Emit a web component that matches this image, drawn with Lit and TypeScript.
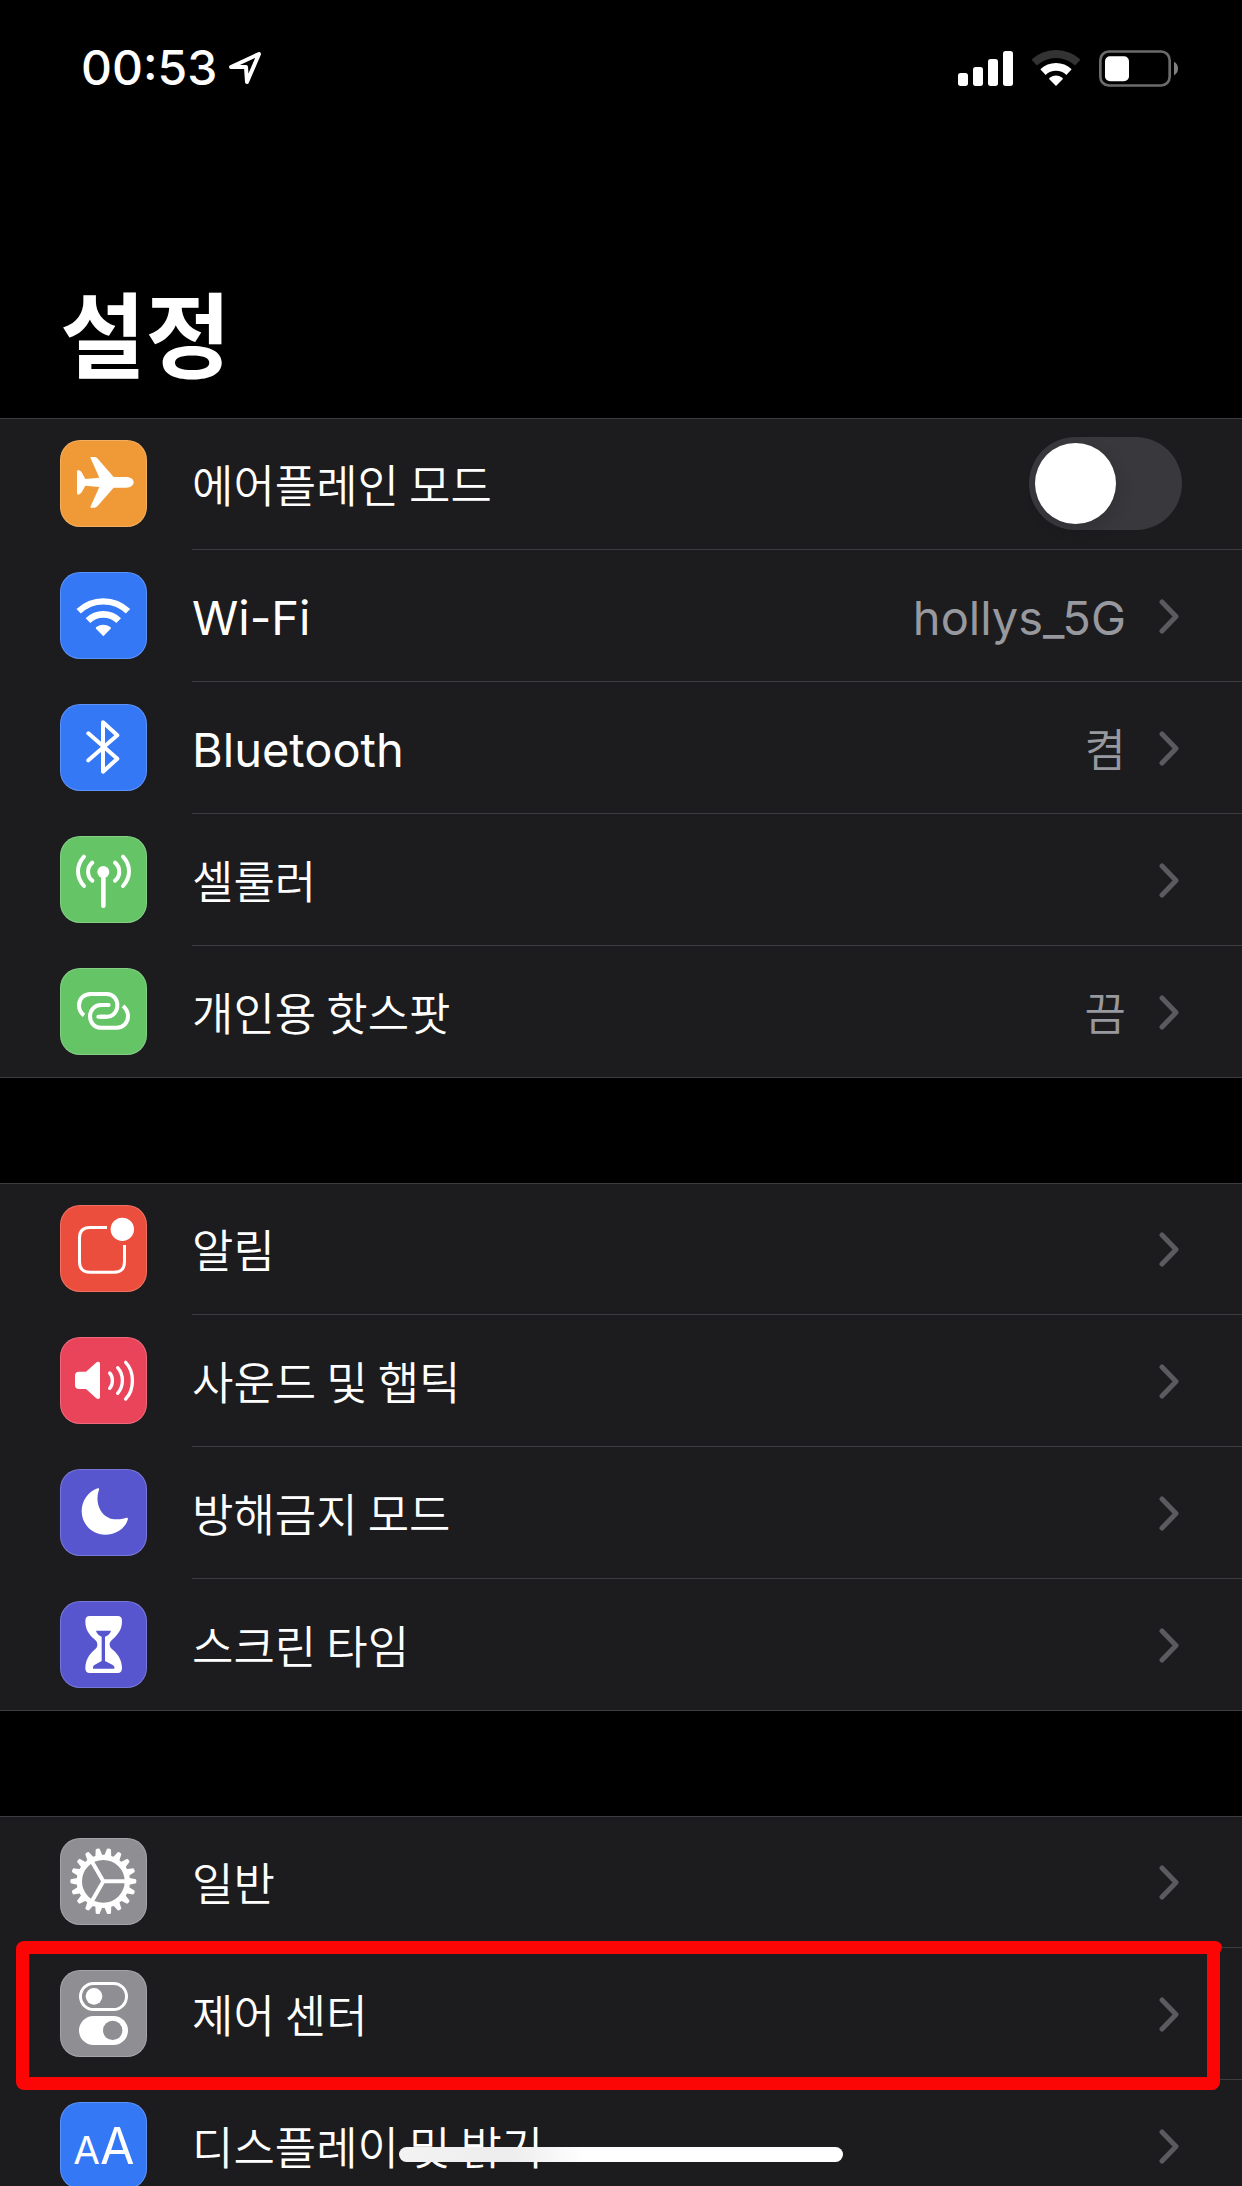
import { LitElement, html, svg, css, nothing } from "lit";
import type { SVGTemplateResult } from "lit";
import { customElement, property, state } from "lit/decorators.js";
import { classMap } from "lit/directives/class-map.js";

type IconName =
  | "airplane"
  | "wifi"
  | "bluetooth"
  | "cellular"
  | "hotspot"
  | "notifications"
  | "sound"
  | "moon"
  | "hourglass"
  | "gear"
  | "control"
  | "display";

type Tone = "orange" | "blue" | "green" | "red" | "pink" | "purple" | "gray";

interface Item {
  icon: IconName;
  tone: Tone;
  label: string;
  value?: string;
  toggle?: boolean;
  marked?: boolean;
}

const GROUPS: Item[][] = [
  [
    { icon: "airplane", tone: "orange", label: "에어플레인 모드", toggle: true },
    { icon: "wifi", tone: "blue", label: "Wi-Fi", value: "hollys_5G" },
    { icon: "bluetooth", tone: "blue", label: "Bluetooth", value: "켬" },
    { icon: "cellular", tone: "green", label: "셀룰러" },
    { icon: "hotspot", tone: "green", label: "개인용 핫스팟", value: "끔" },
  ],
  [
    { icon: "notifications", tone: "red", label: "알림" },
    { icon: "sound", tone: "pink", label: "사운드 및 햅틱" },
    { icon: "moon", tone: "purple", label: "방해금지 모드" },
    { icon: "hourglass", tone: "purple", label: "스크린 타임" },
  ],
  [
    { icon: "gear", tone: "gray", label: "일반" },
    { icon: "control", tone: "gray", label: "제어 센터", marked: true },
    { icon: "display", tone: "blue", label: "디스플레이 및 밝기" },
  ],
];

const gearTeeth = Array.from({ length: 18 }, (_, i) => i * 20);

/* Glyphs are drawn on a 261-unit square, three units to a pixel. */
const GLYPHS: Record<IconName, SVGTemplateResult> = {
  airplane: svg`<path class="fill" d="M221 127C221 118 212 111 199 111H161L112 55Q108 51 103 51H93Q90 51 92 55L118 113L76 117L65 97Q61 91 55 90Q51 90 51 95V159Q51 164 55 164Q61 163 65 157L76 137L118 141L92 199Q90 203 93 203H103Q108 203 112 199L161 143H199C212 143 221 136 221 127Z"/>`,
  wifi: svg`
    <path class="line butt" stroke-width="19" d="M56 118A106 106 0 0 1 204 118"/>
    <path class="line butt" stroke-width="20" d="M84 146A66 66 0 0 1 176 146"/>
    <path class="fill" d="M130 193L108 170Q106 168 109 165Q130 152 151 165Q154 168 152 170Z"/>`,
  bluetooth: svg`<path class="line" stroke-width="12" d="M85 88L172 164L129 203V55L172 94L85 169"/>`,
  cellular: svg`
    <circle class="fill" cx="130" cy="108" r="18"/>
    <path class="line" stroke-width="14" d="M130 108V209"/>
    <path class="line" stroke-width="12" d="M97 80C80 94 80 120 97 134M72 62C48 88 48 124 72 150M165 80C182 94 182 120 165 134M189 62C213 88 213 124 189 150"/>`,
  hotspot: svg`
    <path class="line butt" stroke-width="12" d="M72 142C61 134 57 124 57 112C57 92 72 78 92 78H140C160 78 172 94 172 112C172 130 160 146 142 146H120"/>
    <path class="line butt" stroke-width="12" d="M140 111H122C104 111 90 126 90 145C90 164 103 179 122 179H170C190 179 204 164 204 145C204 134 200 123 189 114"/>
    <path class="line" stroke-width="12" d="M146 111H125M115 146H138"/>`,
  notifications: svg`
    <path class="line butt" stroke-width="9" d="M141 67.5H90Q58.5 67.5 58.5 99V170Q58.5 201.5 90 201.5H162Q193.5 201.5 193.5 170V120"/>
    <circle class="fill" cx="187" cy="73" r="35"/>`,
  sound: svg`
    <path class="fill" d="M57 104H78L108 77Q111 74 115 74Q120 74 120 80V180Q120 186 115 186Q111 186 108 183L78 156H57Q45 156 45 144V116Q45 104 57 104Z"/>
    <path class="line" stroke-width="10" d="M149 108C160 120 160 142 149 154M173 92C192 114 192 147 173 169M197 76C224 104 224 158 197 186"/>`,
  moon: svg`<path class="fill" d="M113 58C118 57 118 61 116 65C104 100 122 151 170 151C182 151 190 149 197 147C203 145 205 149 203 153C194 180 167 197 136 197C97 197 65 166 65 127C65 96 84 68 113 58Z"/>`,
  hourglass: svg`
    <path class="fill" d="M89 45H173Q186 45 186 60C186 85 175 98 163 110C152 120 149 123 149 130C149 138 152 141 160 148C176 162 186 180 186 202Q186 216 173 216H89Q76 216 76 202C76 180 86 162 102 148C110 141 112 138 112 130C112 123 109 119 98 110C86 98 76 85 76 60Q76 45 89 45Z"/>
    <path class="cut" d="M108 89H153C151 98 144 103 135 107V180C140 184 160 190 163 197V203H99V197C102 190 120 184 125 180V107C117 103 110 98 108 89Z"/>`,
  gear: svg`
    <circle class="line" stroke-width="16" cx="130" cy="130" r="72"/>
    ${gearTeeth.map(
      (a) => svg`<path class="fill" transform="rotate(${a} 130 130)" d="M205 119L228 124Q231 130 228 136L205 141Z"/>`,
    )}
    <path class="line butt" stroke-width="12" d="M130 130H198M130 130L96 71M130 130L96 189"/>`,
  control: svg`
    <rect class="line" stroke-width="9" x="61.5" y="40.5" width="138" height="78" rx="39"/>
    <circle class="fill" cx="102" cy="79" r="25"/>
    <rect class="fill" x="57" y="138" width="147" height="87" rx="43.5"/>
    <circle class="cut" cx="158" cy="181" r="29"/>`,
  display: svg`
    <text class="letters" text-anchor="middle" x="80" y="185" font-size="116">A</text>
    <text class="letters" text-anchor="middle" x="172" y="185" font-size="150">A</text>`,
};

@customElement("settings-row")
class SettingsRow extends LitElement {
  @property({ attribute: false }) item!: Item;
  @property({ type: Boolean }) last = false;
  @state() private on = false;

  static styles = css`
    :host {
      display: block;
      position: relative;
    }
    .row {
      display: flex;
      gap: 45px;
      padding-left: 60px;
      color: #fff;
      text-decoration: none;
    }
    .tile {
      flex: none;
      width: 87px;
      height: 87px;
      margin: 22px 0;
      border-radius: 20px;
      box-shadow: inset 0 0 0 1px rgba(255, 255, 255, 0.2);
      background: var(--tone);
    }
    .orange { --tone: #f09a37; }
    .blue { --tone: #3478f6; }
    .green { --tone: #65c466; }
    .red { --tone: #eb4e3d; }
    .pink { --tone: #ea445a; }
    .purple { --tone: #5756ce; }
    .gray { --tone: #8e8e93; }
    .glyph {
      display: block;
      width: 100%;
      height: 100%;
    }
    .fill { fill: #fff; }
    .cut { fill: var(--tone); }
    .line {
      fill: none;
      stroke: #fff;
      stroke-linecap: round;
      stroke-linejoin: round;
    }
    .butt { stroke-linecap: butt; }
    .letters {
      fill: #fff;
      font-family: Inter, sans-serif;
      font-weight: 400;
    }
    .body {
      flex: 1;
      min-width: 0;
      min-height: 131px;
      display: flex;
      align-items: center;
      padding-right: 60px;
      border-bottom: 1px solid #3d3d41;
    }
    .last {
      border-bottom: none;
    }
    .text {
      font-family: "Noto Sans CJK KR", sans-serif;
      font-size: 45px;
      line-height: 60px;
      font-weight: 350;
      white-space: nowrap;
    }
    .latin {
      font-family: Inter, sans-serif;
      font-size: 47px;
      font-weight: 400;
      padding-top: 4px;
    }
    .label {
      flex: 1;
    }
    .value {
      color: #98989f;
      margin-right: 32px;
    }
    .chevron {
      flex: none;
      width: 24px;
      height: 36px;
      fill: none;
      stroke: #5a5a5f;
      stroke-width: 5;
      stroke-linecap: round;
      stroke-linejoin: round;
    }
    .switch {
      appearance: none;
      flex: none;
      box-sizing: border-box;
      width: 153px;
      height: 93px;
      margin: 0;
      padding: 6px;
      border-radius: 47px;
      background: #39393d;
      display: flex;
    }
    .switch::before {
      content: "";
      width: 81px;
      height: 81px;
      border-radius: 50%;
      background: #fff;
      box-shadow: 4px 6px 16px rgba(0, 0, 0, 0.12);
    }
    .switch:checked {
      background: #65c466;
      justify-content: flex-end;
    }
    .marker {
      position: absolute;
      inset: -7px 22px -10px 16px;
      border: 13px solid #fb0505;
      border-radius: 8px;
      pointer-events: none;
    }
    .marker::after {
      content: "";
      position: absolute;
      top: -13px;
      right: -15px;
      width: 16px;
      height: 13px;
      border-radius: 7px;
      background: #fb0505;
    }
  `;

  private text(kind: string, text: string) {
    const latin = /^[\x20-\x7e]+$/.test(text);
    return html`<span class=${classMap({ text: true, [kind]: true, latin })}>${text}</span>`;
  }

  render() {
    const { icon, tone, label, value, toggle, marked } = this.item;
    const tile = html`<span class="tile ${tone}">
      <svg class="glyph" viewBox="0 0 261 261" aria-hidden="true">${GLYPHS[icon]}</svg>
    </span>`;
    const body = classMap({ body: true, last: this.last });
    if (toggle) {
      return html`<label class="row">
        ${tile}
        <span class=${body}>
          ${this.text("label", label)}
          <input
            class="switch"
            type="checkbox"
            role="switch"
            .checked=${this.on}
            @change=${(e: Event) => (this.on = (e.target as HTMLInputElement).checked)}
          />
        </span>
      </label>`;
    }
    return html`<a class="row" href="#${icon}">
        ${tile}
        <span class=${body}>
          ${this.text("label", label)}
          ${value ? this.text("value", value) : nothing}
          <svg class="chevron" viewBox="0 0 24 36" aria-hidden="true">
            <path d="M4 4L18 18.500L4 33" />
          </svg>
        </span>
      </a>
      ${marked ? html`<div class="marker"></div>` : nothing}`;
  }
}

@customElement("status-bar")
class StatusBar extends LitElement {
  static styles = css`
    :host {
      display: flex;
      align-items: center;
      height: 36px;
      padding: 50px 64px 46px 81px;
      color: #fff;
    }
    .time {
      font: 500 48px/36px Inter, sans-serif;
    }
    .arrow {
      width: 34px;
      height: 34px;
      margin-left: 11px;
      fill: none;
      stroke: #fff;
      stroke-width: 4;
      stroke-linejoin: round;
    }
    .signs {
      display: flex;
      align-items: center;
      gap: 19px;
      margin-left: auto;
    }
    .signal { width: 55px; height: 35px; fill: #fff; }
    .wifi { width: 48px; height: 36px; }
    .battery { width: 79px; height: 37px; }
  `;

  render() {
    return html`
      <time class="time">00:53</time>
      <svg class="arrow" viewBox="0 0 34 34" aria-hidden="true">
        <path d="M3 16L31 3L19 31L18 16Z" />
      </svg>
      <div class="signs">
        <svg class="signal" viewBox="0 0 165 105" aria-hidden="true">
          <rect x="0" y="66" width="30" height="39" rx="8" />
          <rect x="45" y="48" width="30" height="57" rx="8" />
          <rect x="90" y="24" width="30" height="81" rx="8" />
          <rect x="135" y="0" width="30" height="105" rx="8" />
        </svg>
        <svg class="wifi" viewBox="334 87 144 108" aria-hidden="true">
          <path fill="none" stroke="#333" stroke-width="24" d="M340.500 124.800A96 96 0 0 1 471.500 124.800" />
          <path fill="none" stroke="#fff" stroke-width="23" d="M367 153.300A57 57 0 0 1 445 153.300" />
          <path fill="#fff" d="M406 195L386 175Q384 172 387 170Q406 157 425 170Q428 172 426 175Z" />
        </svg>
        <svg class="battery" viewBox="537 87 237 110" aria-hidden="true">
          <rect x="541" y="91" width="208" height="102" rx="26" fill="none" stroke="#6b6b6b" stroke-width="8" />
          <rect x="555" y="105" width="72" height="75" rx="15" fill="#fff" />
          <path fill="#808080" d="M762 122Q774 128 774 142Q774 156 762 162Z" />
        </svg>
      </div>
    `;
  }
}

@customElement("app-root")
class AppRoot extends LitElement {
  static styles = css`
    :host {
      display: block;
      position: relative;
      height: 100vh;
      overflow: hidden;
      background: #000;
    }
    .title {
      margin: 0;
      padding: 143px 60px 31px;
      color: #fff;
      font: 700 93px/112px "Noto Sans CJK KR", sans-serif;
    }
    .groups {
      display: flex;
      flex-direction: column;
      gap: 105px;
    }
    .group {
      margin: 0;
      padding: 0;
      list-style: none;
      background: #1c1c1e;
      border-bottom: 1px solid #3d3d41;
      box-shadow: inset 0 1px #3d3d41;
    }
    .home {
      position: absolute;
      left: 50%;
      bottom: 24px;
      width: 444px;
      height: 15px;
      margin-left: -222px;
      border-radius: 8px;
      background: linear-gradient(90deg, #f3f3f3, #ededed 25%, #fff 42%);
    }
  `;

  render() {
    return html`
      <status-bar></status-bar>
      <h1 class="title">설정</h1>
      <main class="groups">
        ${GROUPS.map(
          (group) => html`<ul class="group">
            ${group.map(
              (item, i) => html`<li>
                <settings-row .item=${item} ?last=${i === group.length - 1}></settings-row>
              </li>`,
            )}
          </ul>`,
        )}
      </main>
      <div class="home"></div>
    `;
  }
}
